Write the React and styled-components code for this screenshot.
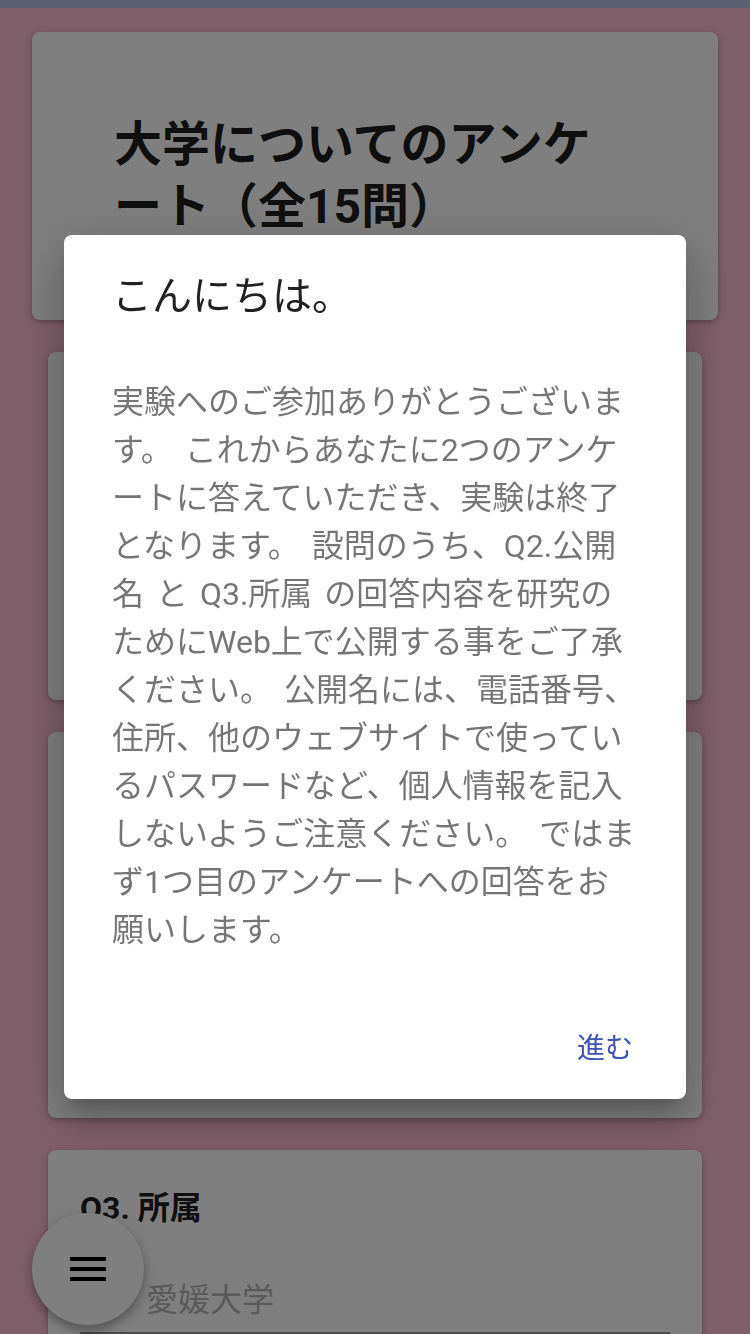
import React from "react";
import styled, { createGlobalStyle } from "styled-components";
import { MdMenu } from "react-icons/md";

const GlobalStyle = createGlobalStyle`
    html, body {
        margin: 0;
        padding: 0;
        background: #febed4;
        font-family: "Roboto", "Noto Sans CJK JP", sans-serif;
    }
    * {
        box-sizing: border-box;
    }
`;

const Page = styled.div`
    min-height: 1334px;
    background: #febed4;
`;

const TopBar = styled.div`
    height: 8px;
    background: #b4c0e4;
`;

const CardList = styled.main`
    display: flex;
    flex-direction: column;
    gap: 32px;
    padding: 24px 32px 80px;
`;

const Card = styled.section`
    background: #fff;
    border-radius: 8px;
    margin: 0 ${(p) => (p.$inset ? "16px" : "0")};
    padding: ${(p) => (p.$header ? "82px" : "34px 32px 0")};
    min-height: ${(p) => p.$minHeight || "auto"};
    box-shadow: 0 2px 4px rgba(0, 0, 0, 0.2), 0 1px 10px rgba(0, 0, 0, 0.12);
`;

const SurveyTitle = styled.h1`
    margin: 0;
    font-size: 48px;
    line-height: 62px;
    font-weight: 700;
    color: rgba(0, 0, 0, 0.9);
`;

const QuestionTitle = styled.h2`
    margin: 0;
    font-size: 32px;
    line-height: 48px;
    font-weight: 700;
    color: rgba(0, 0, 0, 0.9);
`;

const QuestionNote = styled.p`
    margin: 16px 0 0;
    font-size: 28px;
    line-height: 42px;
    color: rgba(0, 0, 0, 0.54);
`;

const Field = styled.div`
    margin-top: 44px;
    padding: 0 0 8px 66px;
    border-bottom: 2px solid #989898;
    font-size: 32px;
    line-height: 48px;
    color: #b4b4b4;
`;

const Overlay = styled.div`
    position: fixed;
    inset: 0;
    background: rgba(0, 0, 0, 0.5);
    display: flex;
    align-items: center;
    justify-content: center;
    z-index: 10;
`;

const Dialog = styled.div`
    width: 622px;
    background: #fff;
    border-radius: 8px;
    box-shadow: 0 11px 15px -7px rgba(0, 0, 0, 0.2),
        0 24px 38px 3px rgba(0, 0, 0, 0.14), 0 9px 46px 8px rgba(0, 0, 0, 0.12);
`;

const DialogTitle = styled.h2`
    margin: 0;
    padding: 38px 46px 0 48px;
    font-size: 40px;
    line-height: 48px;
    font-weight: 400;
    color: rgba(0, 0, 0, 0.87);
`;

const DialogBody = styled.p`
    margin: 57px 46px 0 48px;
    font-size: 32px;
    line-height: 48px;
    word-spacing: 4px;
    color: rgba(0, 0, 0, 0.54);
`;

const DialogActions = styled.div`
    display: flex;
    justify-content: flex-end;
    padding: 63px 37px 24px;
`;

const TextButton = styled.button`
    height: 58px;
    padding: 0 16px;
    border: none;
    background: none;
    font-family: inherit;
    font-size: 28px;
    color: #3f51b5;
    cursor: pointer;
`;

const Fab = styled.button`
    position: fixed;
    left: 32px;
    bottom: 9px;
    width: 112px;
    height: 112px;
    border-radius: 50%;
    border: none;
    background: #fff;
    display: flex;
    align-items: center;
    justify-content: center;
    color: #000;
    box-shadow: 0 6px 10px rgba(0, 0, 0, 0.25), 0 2px 18px rgba(0, 0, 0, 0.14);
`;

const App = () => {
    return (
        <Page>
            <GlobalStyle />
            <TopBar />
            <CardList>
                <Card $header>
                    <SurveyTitle>大学についてのアンケート（全15問）</SurveyTitle>
                </Card>
                <Card $inset $minHeight="348px">
                    <QuestionTitle>Q1. 学年</QuestionTitle>
                    <QuestionNote>現在の学年を選択してください。</QuestionNote>
                    <Field>選択してください</Field>
                </Card>
                <Card $inset $minHeight="386px">
                    <QuestionTitle>Q2. 公開名</QuestionTitle>
                    <QuestionNote>
                        研究のためにWeb上で公開されます。個人情報は記入しないでください。
                    </QuestionNote>
                    <Field>公開名</Field>
                </Card>
                <Card $inset $minHeight="240px">
                    <QuestionTitle>Q3. 所属</QuestionTitle>
                    <Field>愛媛大学</Field>
                </Card>
            </CardList>
            <Fab aria-label="メニュー">
                <MdMenu size={48} />
            </Fab>
            <Overlay>
                <Dialog role="dialog">
                    <DialogTitle>こんにちは。</DialogTitle>
                    <DialogBody>
                        実験へのご参加ありがとうございます。
                        これからあなたに2つのアンケートに答えていただき、実験は終了となります。
                        設問のうち、Q2.公開名 と Q3.所属
                        の回答内容を研究のためにWeb上で公開する事をご了承ください。
                        公開名には、電話番号、住所、他のウェブサイトで使っているパスワードなど、個人情報を記入しないようご注意ください。
                        ではまず1つ目のアンケートへの回答をお願いします。
                    </DialogBody>
                    <DialogActions>
                        <TextButton>進む</TextButton>
                    </DialogActions>
                </Dialog>
            </Overlay>
        </Page>
    );
};

export default App;
